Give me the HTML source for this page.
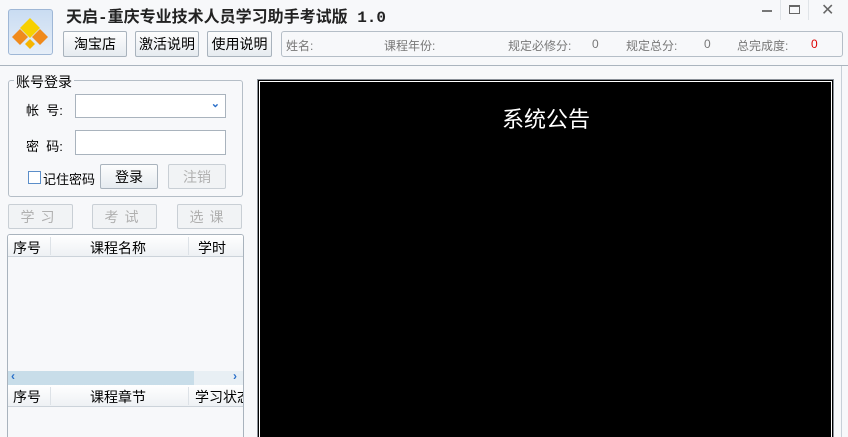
<!DOCTYPE html><html><head><meta charset="utf-8"><style>
*{margin:0;padding:0;box-sizing:border-box}
html,body{width:848px;height:437px;overflow:hidden}
body{background:#f7f8fa;font-family:"Liberation Sans","Noto Sans CJK SC","WenQuanYi Zen Hei",sans-serif;font-size:13px;color:#000;position:relative}
.a{position:absolute}
.btn{position:absolute;border:1px solid #a9b3bd;border-radius:2px;background:linear-gradient(#fdfdfd,#e6ebf0);text-align:center;line-height:24px;font-size:14px}
.dis{color:#b0b0b0;border-color:#c9cfd5;background:#f1f3f5}
.lbl{position:absolute;font-size:12px;color:#777}
</style></head><body>
<div class="a" style="left:8px;top:9px;width:45px;height:46px;border:1px solid #9fb7d6;border-radius:3px;background:linear-gradient(#c9dcf2,#e6eef8)">
<svg width="43" height="44" viewBox="0 0 43 44"><polygon points="21,8 31,18 21,28 11,18" fill="#f7d000"/><polygon points="11,19 19,27 11,35 3,27" fill="#f08a1c"/><polygon points="31,19 39,27 31,35 23,27" fill="#f08a1c"/><polygon points="21,29 26,34 21,39 16,34" fill="#f5b500"/></svg></div>
<div class="a" style="left:66px;top:3px;font-size:16px;font-weight:bold;color:#222;font-family:'Liberation Mono','Noto Sans CJK SC',monospace">天启-重庆专业技术人员学习助手考试版 1.0</div>
<div class="a" style="left:762px;top:10px;width:10px;height:2px;background:#777"></div>
<div class="a" style="left:780px;top:0;width:1px;height:20px;background:#e0e4e8"></div>
<div class="a" style="left:789px;top:5px;width:11px;height:9px;border:1px solid #666;border-top-width:2px"></div>
<div class="a" style="left:808px;top:0;width:1px;height:20px;background:#e0e4e8"></div>
<div class="a" style="left:821px;top:0;font-size:16px;color:#666">✕</div>
<div class="btn" style="left:63px;top:31px;width:64px;height:26px">淘宝店</div>
<div class="btn" style="left:135px;top:31px;width:64px;height:26px">激活说明</div>
<div class="btn" style="left:207px;top:31px;width:65px;height:26px">使用说明</div>
<div class="a" style="left:281px;top:31px;width:562px;height:26px;border:1px solid #b5bec7;border-radius:3px;background:#f7f8fa"></div>
<div class="lbl" style="left:286px;top:37px">姓名:</div>
<div class="lbl" style="left:384px;top:37px">课程年份:</div>
<div class="lbl" style="left:508px;top:37px">规定必修分:</div>
<div class="lbl" style="left:592px;top:37px">0</div>
<div class="lbl" style="left:626px;top:37px">规定总分:</div>
<div class="lbl" style="left:704px;top:37px">0</div>
<div class="lbl" style="left:737px;top:37px">总完成度:</div>
<div class="lbl" style="left:811px;top:37px;color:#d00">0</div>
<div class="a" style="left:0;top:65px;width:848px;height:1px;background:#aab4be"></div>
<div class="a" style="left:8px;top:80px;width:235px;height:117px;border:1px solid #b5bec7;border-radius:3px"></div>
<div class="a" style="left:14px;top:72px;background:#f7f8fa;padding:0 2px;font-size:14px">账号登录</div>
<div class="a" style="left:26px;top:100px">帐&nbsp;&nbsp;号:</div>
<div class="a" style="left:75px;top:94px;width:151px;height:24px;border:1px solid #a9b3bd;background:#fff"><span style="position:absolute;right:5px;top:2px;color:#2a6fc9;font-size:11px;font-weight:bold">&#8964;</span></div>
<div class="a" style="left:26px;top:136px">密&nbsp;&nbsp;码:</div>
<div class="a" style="left:75px;top:130px;width:151px;height:25px;border:1px solid #a9b3bd;background:#fff"></div>
<div class="a" style="left:28px;top:171px;width:13px;height:13px;border:1px solid #5b8ec9;background:#fff"></div>
<div class="a" style="left:43px;top:169px">记住密码</div>
<div class="btn" style="left:100px;top:164px;width:58px;height:25px">登录</div>
<div class="btn dis" style="left:168px;top:164px;width:58px;height:25px">注销</div>
<div class="btn dis" style="left:8px;top:204px;width:65px;height:25px;letter-spacing:6px">学习</div>
<div class="btn dis" style="left:92px;top:204px;width:65px;height:25px;letter-spacing:6px">考试</div>
<div class="btn dis" style="left:177px;top:204px;width:65px;height:25px;letter-spacing:6px">选课</div>
<div class="a" style="left:7px;top:234px;width:237px;height:210px;border:1px solid #a9b3bd;border-radius:3px;overflow:hidden">
<div class="a" style="left:0;top:0;width:237px;height:22px;background:linear-gradient(#fff,#eef1f4);border-bottom:1px solid #ccd3da"></div>
<div class="a" style="left:5px;top:3px;font-size:14px">序号</div><div class="a" style="left:42px;top:2px;width:1px;height:18px;background:#dde2e7"></div>
<div class="a" style="left:82px;top:3px;font-size:14px">课程名称</div><div class="a" style="left:180px;top:2px;width:1px;height:18px;background:#dde2e7"></div>
<div class="a" style="left:190px;top:3px;font-size:14px">学时</div>
<div class="a" style="left:0;top:136px;width:237px;height:14px;background:#e8eff4"></div>
<div class="a" style="left:0;top:136px;width:186px;height:14px;background:#c8dde9"></div>
<div class="a" style="left:3px;top:134px;color:#2a6fc9;font-size:12px;font-weight:bold">‹</div>
<div class="a" style="left:225px;top:134px;color:#2a6fc9;font-size:12px;font-weight:bold">›</div>
<div class="a" style="left:0;top:150px;width:237px;height:22px;background:linear-gradient(#fff,#eef1f4);border-bottom:1px solid #ccd3da"></div>
<div class="a" style="left:5px;top:152px;font-size:14px">序号</div><div class="a" style="left:42px;top:152px;width:1px;height:18px;background:#dde2e7"></div>
<div class="a" style="left:82px;top:152px;font-size:14px">课程章节</div><div class="a" style="left:180px;top:152px;width:1px;height:18px;background:#dde2e7"></div>
<div class="a" style="left:187px;top:152px;font-size:14px;white-space:nowrap">学习状态</div>
</div>
<div class="a" style="left:257px;top:79px;width:577px;height:370px;border:1px solid #8a9098;background:#000;border-width:1px 1px 0 1px"><div style="position:absolute;left:1px;top:1px;right:1px;bottom:0;border:1px solid #fff;border-bottom:0;background:#000"></div></div>
<div class="a" style="left:841px;top:66px;width:1px;height:371px;background:#c8d0d8"></div>
<div class="a" style="left:260px;top:102px;width:572px;text-align:center;color:#fff;font-size:22px">系统公告</div>
</body></html>
